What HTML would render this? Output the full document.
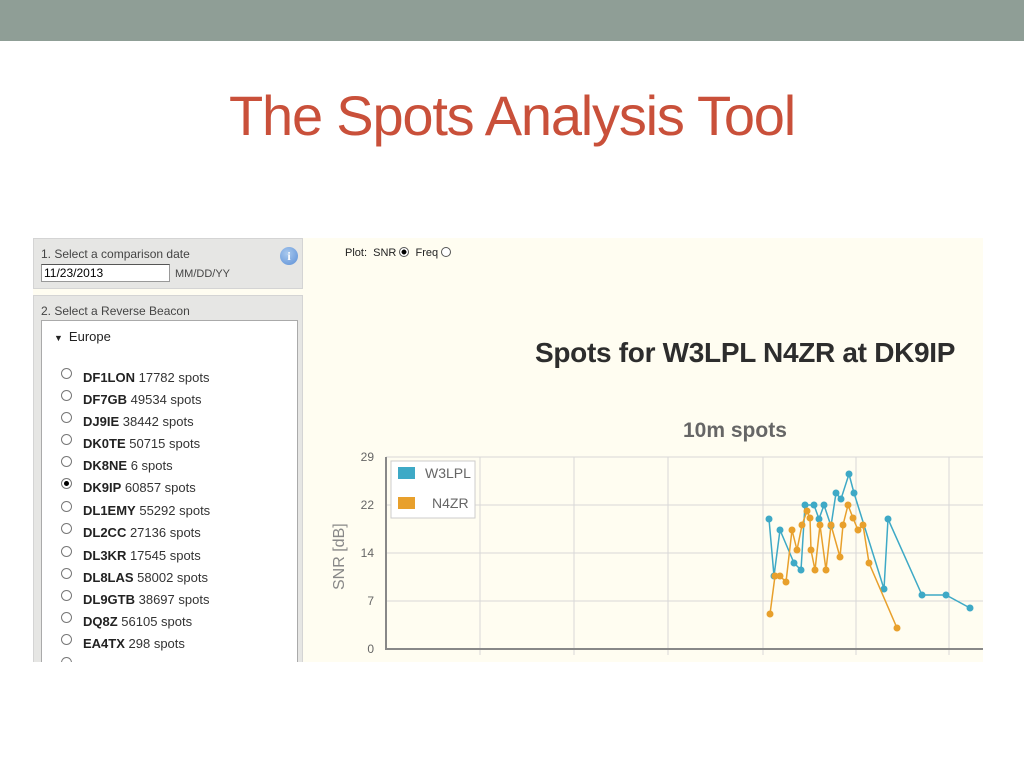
<!DOCTYPE html>
<html><head><meta charset="utf-8"><style>
*{margin:0;padding:0;box-sizing:border-box}
body{width:1024px;height:768px;background:#fff;position:relative;overflow:hidden;font-family:"Liberation Sans",sans-serif}
.bar{position:absolute;left:0;top:0;width:1024px;height:41px;background:#8f9e96}
h1{position:absolute;left:0;width:1024px;top:83px;text-align:center;font-weight:normal;font-size:56px;color:#c9503a;letter-spacing:-1.2px}
.shot{position:absolute;left:33px;top:238px;width:950px;height:424px;background:#fffdf1;overflow:hidden}
.p1{position:absolute;left:0;top:0;width:270px;height:51px;background:#e6e6e4;border:1px solid #d4d4d4}
.p2{position:absolute;left:0;top:57px;width:270px;height:370px;background:#e6e6e4;border:1px solid #d4d4d4}
.lbl{position:absolute;font-size:12px;color:#444}
.inp{position:absolute;left:7px;top:25px;width:129px;height:18px;background:#fff;border:1px solid #999;border-top-color:#555;font-size:12px;padding-left:2px;line-height:16px;color:#000}
.info{position:absolute;left:246px;top:8px;width:18px;height:18px;border-radius:50%;background:radial-gradient(circle at 40% 35%,#a9c9ee,#5b8fd6);color:#fff;font:bold 12px "Liberation Serif",serif;text-align:center;line-height:18px}
.list{position:absolute;left:7px;top:24px;width:257px;height:350px;background:#fff;border:1px solid #aaa}
.it{position:absolute;left:20px;font-size:13px;color:#333}
.it b{color:#222}
.rad{position:absolute;left:-1px;top:-2px;width:11px;height:11px;border-radius:50%;border:1px solid #777;background:#fff}
.rad.on::after{content:"";position:absolute;left:2px;top:2px;width:5px;height:5px;border-radius:50%;background:#000}
</style></head><body>
<div class="bar"></div>
<h1>The Spots Analysis Tool</h1>
<div class="shot">
 <div class="p1">
  <div class="lbl" style="left:7px;top:8px">1. Select a comparison date</div>
  <div class="inp">11/23/2013</div>
  <div class="lbl" style="left:141px;top:29px;font-size:11px">MM/DD/YY</div>
  <div class="info">i</div>
 </div>
 <div class="p2">
  <div class="lbl" style="left:7px;top:8px">2. Select a Reverse Beacon</div>
  <div class="list">
   <div style="position:absolute;left:12px;top:8px;font-size:13px;color:#222"><span style="font-size:9px;margin-right:6px">▼</span>Europe</div>
   <div style="position:absolute;left:0;top:49px;width:100%">
    <div class="it" style="top:0"><span class="rad"></span><span style="margin-left:21px"><b>DF1LON</b> 17782 spots</span></div>
    <div class="it" style="top:22px"><span class="rad"></span><span style="margin-left:21px"><b>DF7GB</b> 49534 spots</span></div>
    <div class="it" style="top:44px"><span class="rad"></span><span style="margin-left:21px"><b>DJ9IE</b> 38442 spots</span></div>
    <div class="it" style="top:66px"><span class="rad"></span><span style="margin-left:21px"><b>DK0TE</b> 50715 spots</span></div>
    <div class="it" style="top:88px"><span class="rad"></span><span style="margin-left:21px"><b>DK8NE</b> 6 spots</span></div>
    <div class="it" style="top:110px"><span class="rad on"></span><span style="margin-left:21px"><b>DK9IP</b> 60857 spots</span></div>
    <div class="it" style="top:133px"><span class="rad"></span><span style="margin-left:21px"><b>DL1EMY</b> 55292 spots</span></div>
    <div class="it" style="top:155px"><span class="rad"></span><span style="margin-left:21px"><b>DL2CC</b> 27136 spots</span></div>
    <div class="it" style="top:178px"><span class="rad"></span><span style="margin-left:21px"><b>DL3KR</b> 17545 spots</span></div>
    <div class="it" style="top:200px"><span class="rad"></span><span style="margin-left:21px"><b>DL8LAS</b> 58002 spots</span></div>
    <div class="it" style="top:222px"><span class="rad"></span><span style="margin-left:21px"><b>DL9GTB</b> 38697 spots</span></div>
    <div class="it" style="top:244px"><span class="rad"></span><span style="margin-left:21px"><b>DQ8Z</b> 56105 spots</span></div>
    <div class="it" style="top:266px"><span class="rad"></span><span style="margin-left:21px"><b>EA4TX</b> 298 spots</span></div>
    <div class="it" style="top:289px"><span class="rad"></span></div>
   </div>
  </div>
 </div>
 <div style="position:absolute;left:312px;top:9px;font-size:11px;color:#222">Plot: &nbsp;<b style="font-weight:normal">SNR</b> <span style="display:inline-block;width:10px;height:10px;border-radius:50%;border:1px solid #555;vertical-align:-1px;background:radial-gradient(#000 40%,#fff 45%)"></span> &nbsp;Freq <span style="display:inline-block;width:10px;height:10px;border-radius:50%;border:1px solid #555;vertical-align:-1px;background:#fff"></span></div>
 <div style="position:absolute;left:502px;top:99px;font-size:28px;font-weight:bold;color:#2d2d2d;letter-spacing:-0.3px">Spots for W3LPL N4ZR at DK9IP</div>
 <div style="position:absolute;left:650px;top:181px;font-size:21px;font-weight:bold;color:#666">10m spots</div>
</div>
<svg style="position:absolute;left:0;top:0" width="1024" height="768">
 <g stroke="#d8d8d8" stroke-width="1">
  <line x1="386" y1="457" x2="983" y2="457"/><line x1="386" y1="505" x2="983" y2="505"/><line x1="386" y1="553" x2="983" y2="553"/><line x1="386" y1="601" x2="983" y2="601"/>
  <line x1="480" y1="457" x2="480" y2="655"/><line x1="574" y1="457" x2="574" y2="655"/><line x1="668" y1="457" x2="668" y2="655"/><line x1="763" y1="457" x2="763" y2="655"/><line x1="856" y1="457" x2="856" y2="655"/><line x1="949" y1="457" x2="949" y2="655"/>
 </g>
 <line x1="386" y1="457" x2="386" y2="650" stroke="#888" stroke-width="2"/>
 <line x1="385" y1="649" x2="983" y2="649" stroke="#888" stroke-width="2"/>
 <g font-size="12" fill="#666" text-anchor="end" font-family="Liberation Sans">
  <text x="374" y="461">29</text><text x="374" y="509">22</text><text x="374" y="557">14</text><text x="374" y="605">7</text><text x="374" y="653">0</text>
 </g>
 <text transform="translate(344,590) rotate(-90)" font-size="16" fill="#888" font-family="Liberation Sans">SNR [dB]</text>
 <rect x="391" y="461" width="84" height="57" fill="#fff" stroke="#ccc"/>
 <rect x="398" y="467" width="17" height="12" fill="#3ea9c6"/>
 <rect x="398" y="497" width="17" height="12" fill="#e8a02c"/>
 <text x="425" y="478" font-size="14" fill="#666" font-family="Liberation Sans">W3LPL</text>
 <text x="432" y="508" font-size="14" fill="#666" font-family="Liberation Sans">N4ZR</text>
 <polyline fill="none" stroke="#3ea9c6" stroke-width="1.5" points="769,519 774,576 780,530 794,563 801,570 805,505 814,505 819,519 824,505 831,526 836,493 841,499 849,474 854,493 884,589 888,519 922,595 946,595 970,608"/>
 <g fill="#3ea9c6"><circle cx="769" cy="519" r="3.5"/><circle cx="774" cy="576" r="3.5"/><circle cx="780" cy="530" r="3.5"/><circle cx="794" cy="563" r="3.5"/><circle cx="801" cy="570" r="3.5"/><circle cx="805" cy="505" r="3.5"/><circle cx="814" cy="505" r="3.5"/><circle cx="819" cy="519" r="3.5"/><circle cx="824" cy="505" r="3.5"/><circle cx="831" cy="526" r="3.5"/><circle cx="836" cy="493" r="3.5"/><circle cx="841" cy="499" r="3.5"/><circle cx="849" cy="474" r="3.5"/><circle cx="854" cy="493" r="3.5"/><circle cx="884" cy="589" r="3.5"/><circle cx="888" cy="519" r="3.5"/><circle cx="922" cy="595" r="3.5"/><circle cx="946" cy="595" r="3.5"/><circle cx="970" cy="608" r="3.5"/></g>
 <polyline fill="none" stroke="#e8a02c" stroke-width="1.5" points="770,614 775,576 780,576 786,582 792,530 797,550 802,525 807,511 810,518 811,550 815,570 820,525 826,570 831,525 840,557 843,525 848,505 853,518 858,530 863,525 869,563 897,628"/>
 <g fill="#e8a02c"><circle cx="770" cy="614" r="3.5"/><circle cx="775" cy="576" r="3.5"/><circle cx="780" cy="576" r="3.5"/><circle cx="786" cy="582" r="3.5"/><circle cx="792" cy="530" r="3.5"/><circle cx="797" cy="550" r="3.5"/><circle cx="802" cy="525" r="3.5"/><circle cx="807" cy="511" r="3.5"/><circle cx="810" cy="518" r="3.5"/><circle cx="811" cy="550" r="3.5"/><circle cx="815" cy="570" r="3.5"/><circle cx="820" cy="525" r="3.5"/><circle cx="826" cy="570" r="3.5"/><circle cx="831" cy="525" r="3.5"/><circle cx="840" cy="557" r="3.5"/><circle cx="843" cy="525" r="3.5"/><circle cx="848" cy="505" r="3.5"/><circle cx="853" cy="518" r="3.5"/><circle cx="858" cy="530" r="3.5"/><circle cx="863" cy="525" r="3.5"/><circle cx="869" cy="563" r="3.5"/><circle cx="897" cy="628" r="3.5"/></g>
</svg>
</body></html>
